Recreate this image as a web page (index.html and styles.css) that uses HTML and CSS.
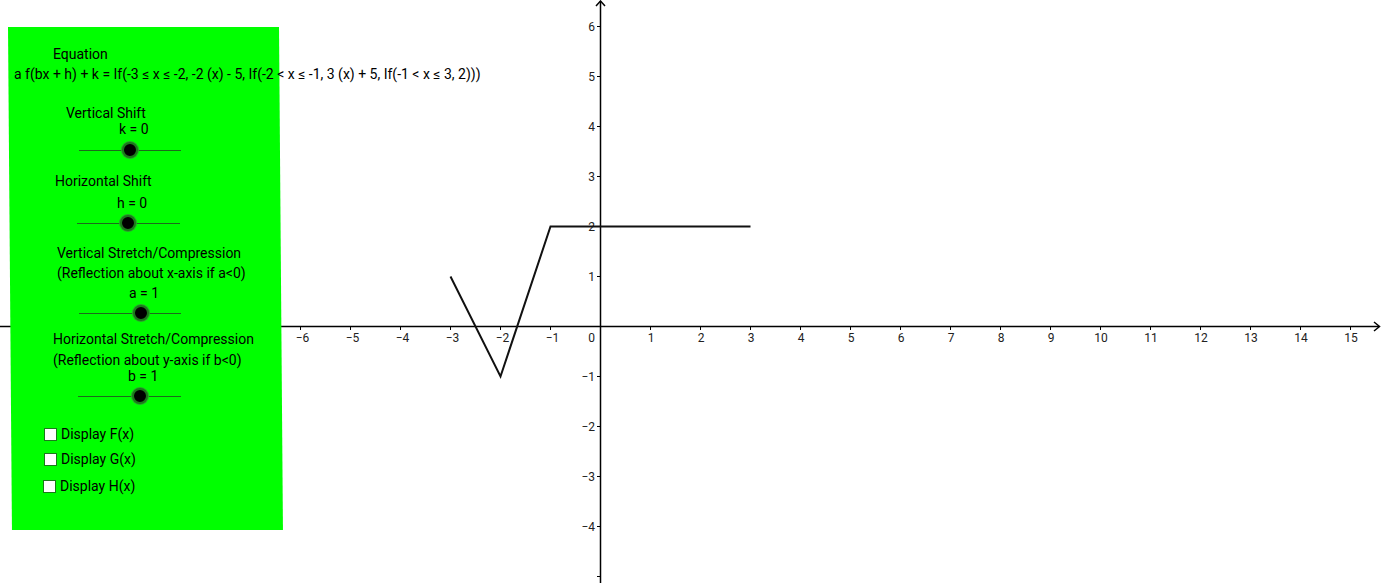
FILE: index.html
```html
<!DOCTYPE html>
<html>
<head>
<meta charset="utf-8">
<link rel="stylesheet" href="styles.css">
</head>
<body>
<div class="applet">
  <svg class="graph" width="1382" height="583" viewBox="0 0 1382 583">
    <g class="axes">
      <line x1="0" y1="326.5" x2="1379" y2="326.5"/>
      <polyline class="arrow" points="1374,322 1379.5,326.5 1374,331"/>
      <line x1="600.5" y1="1" x2="600.5" y2="583"/>
      <polyline class="arrow" points="596,6 600.5,1 605,6"/>
    </g>
    <g class="ticks">
      <line x1="300.5" y1="326.5" x2="300.5" y2="330"/>
      <line x1="350.5" y1="326.5" x2="350.5" y2="330"/>
      <line x1="400.5" y1="326.5" x2="400.5" y2="330"/>
      <line x1="450.5" y1="326.5" x2="450.5" y2="330"/>
      <line x1="500.5" y1="326.5" x2="500.5" y2="330"/>
      <line x1="550.5" y1="326.5" x2="550.5" y2="330"/>
      <line x1="650.5" y1="326.5" x2="650.5" y2="330"/>
      <line x1="700.5" y1="326.5" x2="700.5" y2="330"/>
      <line x1="750.5" y1="326.5" x2="750.5" y2="330"/>
      <line x1="800.5" y1="326.5" x2="800.5" y2="330"/>
      <line x1="850.5" y1="326.5" x2="850.5" y2="330"/>
      <line x1="900.5" y1="326.5" x2="900.5" y2="330"/>
      <line x1="950.5" y1="326.5" x2="950.5" y2="330"/>
      <line x1="1000.5" y1="326.5" x2="1000.5" y2="330"/>
      <line x1="1050.5" y1="326.5" x2="1050.5" y2="330"/>
      <line x1="1100.5" y1="326.5" x2="1100.5" y2="330"/>
      <line x1="1150.5" y1="326.5" x2="1150.5" y2="330"/>
      <line x1="1200.5" y1="326.5" x2="1200.5" y2="330"/>
      <line x1="1250.5" y1="326.5" x2="1250.5" y2="330"/>
      <line x1="1300.5" y1="326.5" x2="1300.5" y2="330"/>
      <line x1="1350.5" y1="326.5" x2="1350.5" y2="330"/>
      <line x1="597" y1="26.5" x2="600.5" y2="26.5"/>
      <line x1="597" y1="76.5" x2="600.5" y2="76.5"/>
      <line x1="597" y1="126.5" x2="600.5" y2="126.5"/>
      <line x1="597" y1="176.5" x2="600.5" y2="176.5"/>
      <line x1="597" y1="226.5" x2="600.5" y2="226.5"/>
      <line x1="597" y1="276.5" x2="600.5" y2="276.5"/>
      <line x1="597" y1="376.5" x2="600.5" y2="376.5"/>
      <line x1="597" y1="426.5" x2="600.5" y2="426.5"/>
      <line x1="597" y1="476.5" x2="600.5" y2="476.5"/>
      <line x1="597" y1="526.5" x2="600.5" y2="526.5"/>
      <line x1="597" y1="576.5" x2="600.5" y2="576.5"/>
    </g>
    <g class="xlabels">
      <text x="302.5" y="342">−6</text>
      <text x="352.5" y="342">−5</text>
      <text x="402.5" y="342">−4</text>
      <text x="452.5" y="342">−3</text>
      <text x="502.5" y="342">−2</text>
      <text x="552.5" y="342">−1</text>
      <text x="651" y="342">1</text>
      <text x="701" y="342">2</text>
      <text x="751" y="342">3</text>
      <text x="801" y="342">4</text>
      <text x="851" y="342">5</text>
      <text x="901" y="342">6</text>
      <text x="951" y="342">7</text>
      <text x="1001" y="342">8</text>
      <text x="1051" y="342">9</text>
      <text x="1101" y="342">10</text>
      <text x="1151" y="342">11</text>
      <text x="1201" y="342">12</text>
      <text x="1251" y="342">13</text>
      <text x="1301" y="342">14</text>
      <text x="1351" y="342">15</text>
    </g>
    <g class="ylabels">
      <text x="595" y="342">0</text>
      <text x="595" y="31">6</text>
      <text x="595" y="81">5</text>
      <text x="595" y="131">4</text>
      <text x="595" y="181">3</text>
      <text x="595" y="231">2</text>
      <text x="595" y="281">1</text>
      <text x="595" y="381">−1</text>
      <text x="595" y="431">−2</text>
      <text x="595" y="481">−3</text>
      <text x="595" y="531">−4</text>
    </g>
    <polyline class="fn" points="450.5,276.5 500.5,376.5 550.5,226.5 750.5,226.5"/>
  </svg>

  <div class="panel">
    <div class="txt r-eqtitle">Equation</div>
    <div class="txt r-eq">a f(bx + h) + k = If(-3 ≤ x ≤ -2, -2 (x) - 5, If(-2 &lt; x ≤ -1, 3 (x) + 5, If(-1 &lt; x ≤ 3, 2)))</div>

    <div class="txt r-vs">Vertical Shift</div>
    <div class="txt r-k">k = 0</div>
    <div class="slider s1"><span class="knob" style="left:51px"></span></div>

    <div class="txt r-hs">Horizontal Shift</div>
    <div class="txt r-h">h = 0</div>
    <div class="slider s2"><span class="knob" style="left:51px"></span></div>

    <div class="txt r-vsc">Vertical Stretch/Compression</div>
    <div class="txt r-vsr">(Reflection about x-axis if a&lt;0)</div>
    <div class="txt r-a">a = 1</div>
    <div class="slider s3"><span class="knob" style="left:62px"></span></div>

    <div class="txt r-hsc">Horizontal Stretch/Compression</div>
    <div class="txt r-hsr">(Reflection about y-axis if b&lt;0)</div>
    <div class="txt r-b">b = 1</div>
    <div class="slider s4"><span class="knob" style="left:62px"></span></div>

    <label class="check c1"><span class="box"></span>Display F(x)</label>
    <label class="check c2"><span class="box"></span>Display G(x)</label>
    <label class="check c3"><span class="box"></span>Display H(x)</label>
  </div>
</div>
</body>
</html>
```

FILE: styles.css
```css
html, body {
  margin: 0;
  padding: 0;
  background: #ffffff;
}

.applet {
  position: relative;
  width: 1382px;
  height: 583px;
  overflow: hidden;
  font-family: Roboto, "Liberation Sans", sans-serif;
  color: #000;
}

.graph {
  display: block;
}

.axes line,
.axes polyline {
  stroke: #000;
  stroke-width: 1.5;
  fill: none;
}

.ticks line {
  stroke: #000;
  stroke-width: 1;
}

.xlabels text {
  font-family: Roboto, "Liberation Sans", sans-serif;
  font-size: 12px;
  fill: #222;
  text-anchor: middle;
}

.ylabels text {
  font-family: Roboto, "Liberation Sans", sans-serif;
  font-size: 12px;
  fill: #222;
  text-anchor: end;
}

.fn {
  fill: none;
  stroke: #111;
  stroke-width: 2;
  stroke-linejoin: miter;
}

.panel {
  position: absolute;
  z-index: 1;
  left: 8px;
  top: 27px;
  width: 271px;
  height: 503px;
  box-sizing: border-box;
  padding-top: 19px;
  padding-left: 1px;
  display: flex;
  flex-direction: column;
  align-items: flex-start;
}

.panel::before {
  content: "";
  position: absolute;
  inset: 0;
  background: #00ff00;
  transform-origin: 0 0;
  transform: skewX(0.45deg);
  z-index: -1;
}

.txt {
  font-size: 14px;
  line-height: 16px;
  height: 16px;
  white-space: nowrap;
}

.r-eqtitle { margin-left: 44px; }
.r-eq { margin-left: 5px; margin-top: 4px; }
.r-vs { margin-left: 57px; margin-top: 23px; }
.r-k { margin-left: 110px; }
.r-hs { margin-left: 46px; margin-top: 15px; }
.r-h { margin-left: 108px; margin-top: 6px; }
.r-vsc { margin-left: 48px; margin-top: 14px; }
.r-vsr { margin-left: 48px; margin-top: 4px; }
.r-a { margin-left: 120px; margin-top: 4px; }
.r-hsc { margin-left: 44px; margin-top: 10px; }
.r-hsr { margin-left: 44px; margin-top: 5px; }
.r-b { margin-left: 119px; }

.slider {
  position: relative;
  height: 16px;
  width: 102px;
}

.slider::before {
  content: "";
  position: absolute;
  left: 0;
  right: 0;
  top: 7.5px;
  height: 1px;
  background: #1d6a1d;
}

.s1 { margin-left: 70px; margin-top: 5px; width: 102px; }
.s2 { margin-left: 68px; margin-top: 4px; width: 103px; }
.s3 { margin-left: 70px; margin-top: 4px; width: 102px; }
.s4 { margin-left: 69px; margin-top: 4px; width: 103px; }

.knob {
  position: absolute;
  top: 0;
  width: 12px;
  height: 12px;
  margin-left: -8px;
  border-radius: 50%;
  background: #000;
  border: 2px solid #1b7a1b;
  box-shadow: 0 0 0 1px #2e9e2e;
}

.check {
  display: flex;
  align-items: center;
  gap: 4px;
  height: 16px;
  font-size: 14px;
  line-height: 16px;
  white-space: nowrap;
}

.box {
  width: 11px;
  height: 11px;
  background: #fff;
  border: 1px solid #1b7a1b;
  flex: none;
}

.c1 { margin-left: 35px; margin-top: 22px; }
.c2 { margin-left: 35px; margin-top: 9px; }
.c3 { margin-left: 34px; margin-top: 11px; }
```
